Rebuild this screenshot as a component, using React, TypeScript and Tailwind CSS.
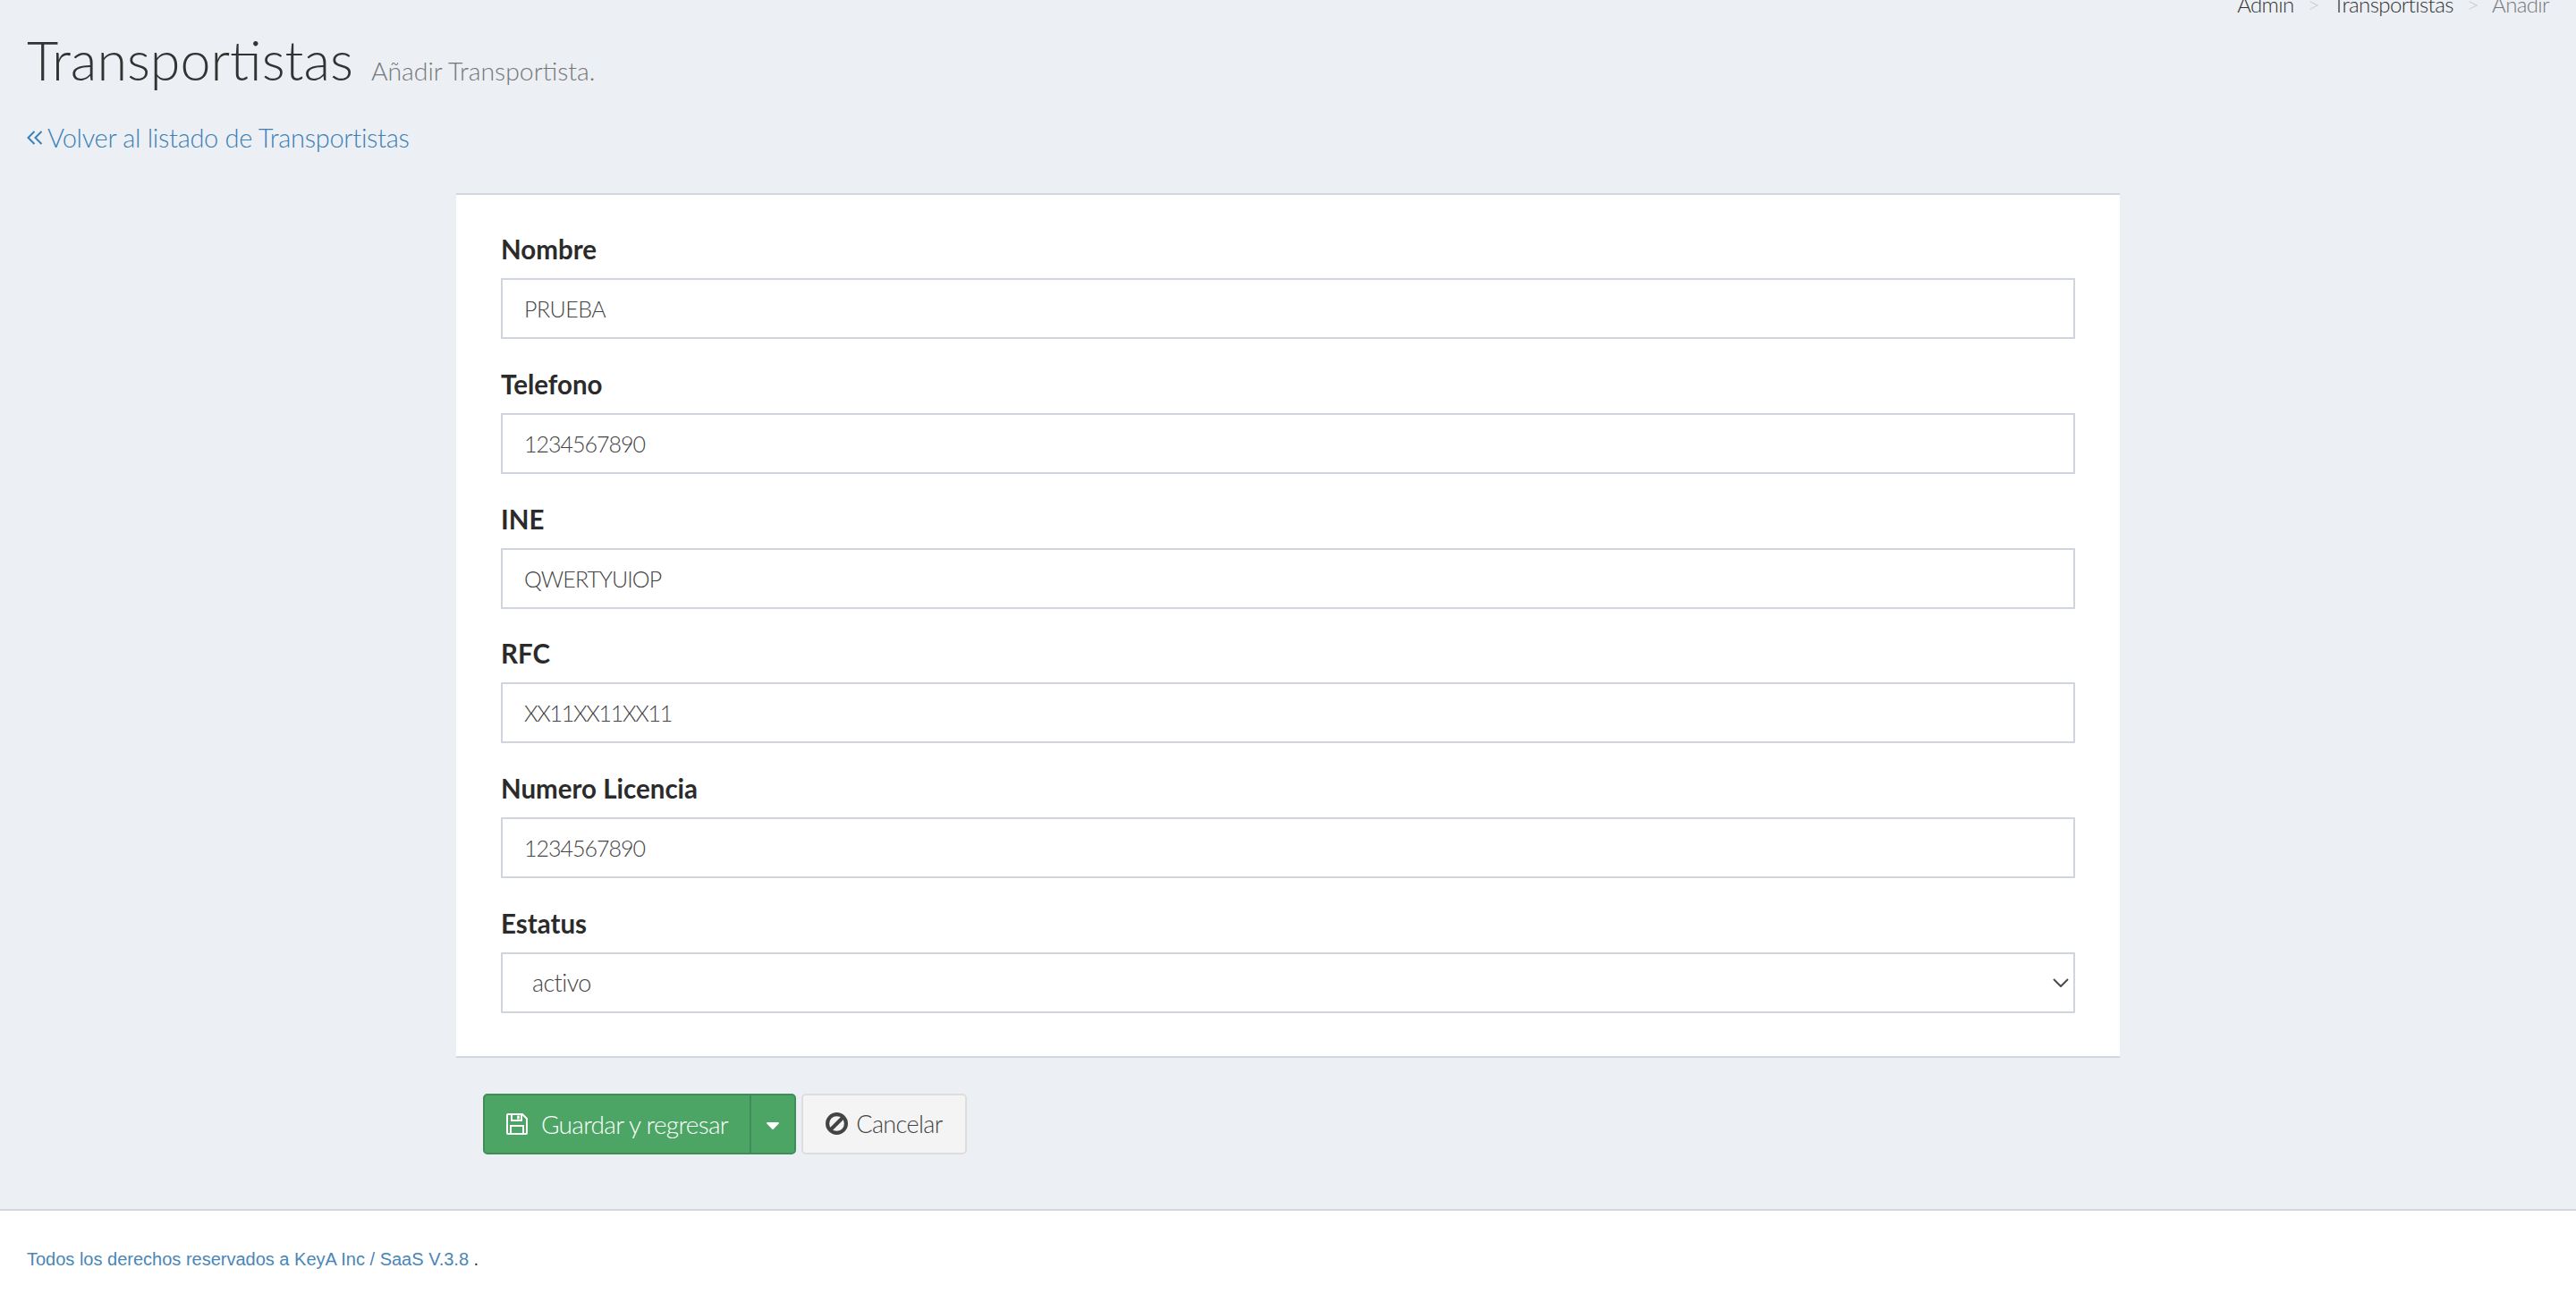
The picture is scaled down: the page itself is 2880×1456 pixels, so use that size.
import React from "react";
import { FaCaretDown } from "react-icons/fa";

const fields = [
  { label: "Nombre", value: "PRUEBA", track: "tracking-[-0.5px]" },
  { label: "Telefono", value: "1234567890", track: "tracking-[-1px]" },
  { label: "INE", value: "QWERTYUIOP", track: "tracking-[-0.9px]" },
  { label: "RFC", value: "XX11XX11XX11", track: "tracking-[-1.3px]" },
  { label: "Numero Licencia", value: "1234567890", track: "tracking-[-1px]" },
];

function FieldLabel({ text }: { text: string }) {
  return <label className="mb-[15px] block h-[34px] text-[29.5px] leading-[34px] font-bold text-[#2b2b2b]">{text}</label>;
}

export default function App() {
  return (
    <div className="flex min-h-screen flex-col overflow-hidden bg-[#ecf0f5] font-['Lato',sans-serif] font-light text-[#333]">
      <main className="flex-1 px-[30px]">
        <div className="flex items-start justify-between">
          <div className="flex items-baseline gap-[20px] pt-[32px]">
            <h1 className="text-[61px] leading-[70px] font-light">Transportistas</h1>
            <small className="text-[28.4px] text-[#777]">Añadir Transportista.</small>
          </div>
          <nav className="-mt-[9px] flex gap-[15px] text-[24px] leading-[28px] tracking-[-0.6px]">
            <span>Admin</span>
            <span className="text-[#ccc]">&gt;</span>
            <span>Transportistas</span>
            <span className="text-[#ccc]">&gt;</span>
            <span className="text-[#777]">Añadir</span>
          </nav>
        </div>

        <a className="mt-[34px] flex h-[36px] items-center gap-[5px] text-[29px] tracking-[-0.3px] text-[#3c80b5]">
          <svg viewBox="0 0 18 16" className="h-[16px] w-[18px]" fill="none" stroke="#3c80b5" strokeWidth="2">
            <path d="M8.5 1L1.5 8l7 7M16.5 1l-7 7 7 7" />
          </svg>
          Volver al listado de Transportistas
        </a>

        <div className="mx-auto mt-[44px] w-[1860px]">
          <section className="border-t-2 border-b-2 border-[#d2d6de] bg-white px-[50px] pt-[44px] pb-[48px]">
            {fields.map((f) => (
              <div key={f.label} className="mb-[33.8px]">
                <FieldLabel text={f.label} />
                <input
                  readOnly
                  defaultValue={f.value}
                  className={`h-[68px] w-full border-2 border-[#d0d4dd] bg-white px-[24px] text-[25px] text-[#444] outline-none ${f.track}`}
                />
              </div>
            ))}
            <div>
              <FieldLabel text="Estatus" />
              <div className="relative">
                <select
                  defaultValue="activo"
                  className="h-[68px] w-full appearance-none border-2 border-[#d0d4dd] bg-white px-[33px] text-[27px] tracking-[-0.6px] text-[#444] outline-none"
                >
                  <option value="activo">activo</option>
                </select>
                <svg viewBox="0 0 18 10" className="pointer-events-none absolute top-[29px] right-[7px] h-[10px] w-[18px]" fill="none" stroke="#4a4a4a" strokeWidth="2">
                  <path d="M1 1l8 8 8-8" />
                </svg>
              </div>
            </div>
          </section>

          <div className="mt-[40px] ml-[30px] flex gap-[6px]">
            <div className="flex h-[68px] rounded-[5px] border-2 border-[#3f8d5a] bg-[#4ca564] text-white">
              <button className="flex w-[298px] items-center gap-[15px] border-r-2 border-[#3f8d5a] pl-[24px] text-[28px] tracking-[-0.7px]">
                <svg viewBox="0 0 24 24" className="h-[24px] w-[24px]" fill="none" stroke="#fff" strokeWidth="2">
                  <path d="M2 1h16l5 5v16a1 1 0 0 1-1 1H2a1 1 0 0 1-1-1V2a1 1 0 0 1 1-1z" />
                  <path d="M6 1v7h11V1M5 23v-9h14v9" />
                  <path d="M13.5 2.5v4" strokeWidth="2.6" />
                </svg>
                Guardar y regresar
              </button>
              <button className="flex w-[48px] items-center justify-center pt-[3px]">
                <FaCaretDown className="h-[24px] w-[20px]" />
              </button>
            </div>
            <button className="flex h-[68px] w-[185px] items-center justify-center gap-[9px] rounded-[5px] border-2 border-[#ddd] bg-[#f4f4f4] text-[27px] tracking-[-0.6px] text-[#444]">
              <svg viewBox="0 0 24 24" className="h-[25px] w-[25px]" fill="none" stroke="#444" strokeWidth="4">
                <circle cx="12" cy="12" r="10" />
                <path d="M5.5 18.5l13-13" />
              </svg>
              Cancelar
            </button>
          </div>
        </div>
      </main>

      <footer className="flex h-[104px] items-center border-t-2 border-[#d2d6de] bg-white px-[30px] pt-[5px] font-['Liberation_Sans',sans-serif] font-normal">
        <p className="text-[20px] text-[#333]">
          <a className="text-[#4a86b8]">Todos los derechos reservados a KeyA Inc / SaaS V.3.8</a> .
        </p>
      </footer>
    </div>
  );
}
